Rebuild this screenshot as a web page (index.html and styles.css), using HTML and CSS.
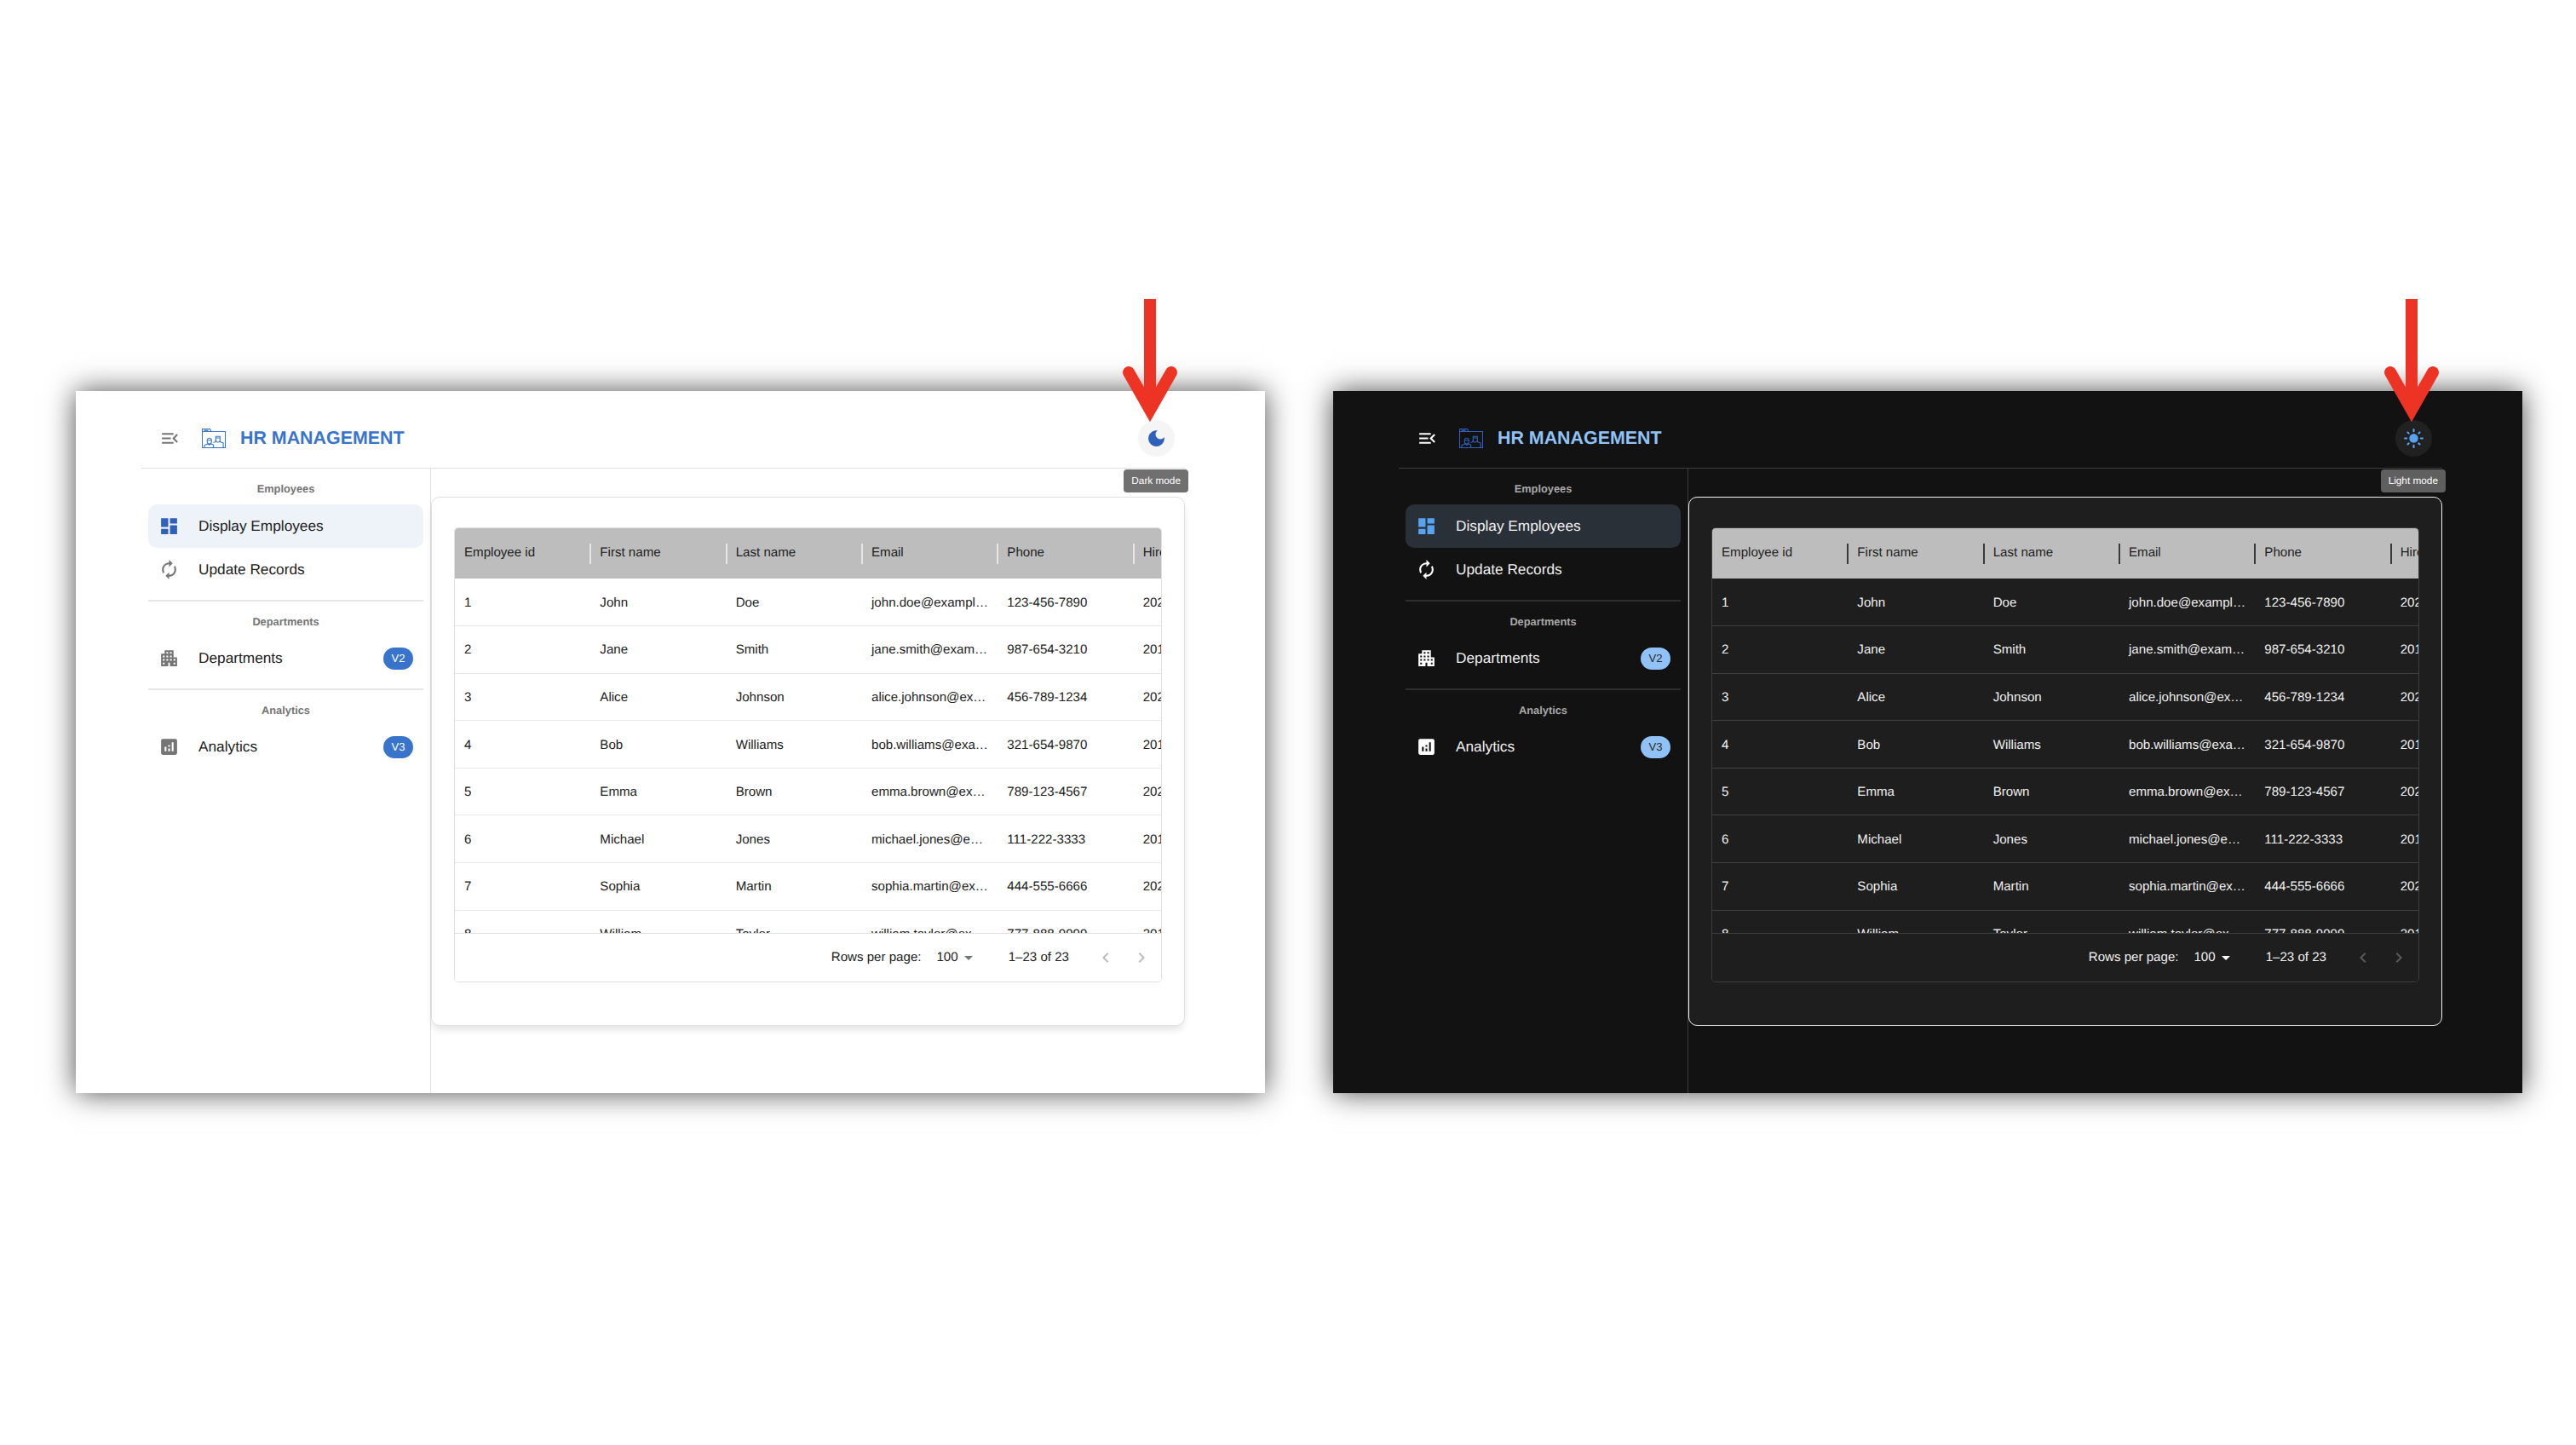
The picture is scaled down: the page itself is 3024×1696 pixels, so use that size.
FILE: index.html
```html
<!DOCTYPE html>
<html lang="en">
<head>
<meta charset="utf-8">
<title>HR Management themes</title>
<link rel="stylesheet" href="styles.css">
</head>
<body>
<svg class="defs" width="0" height="0" aria-hidden="true">
  <symbol id="i-menu" viewBox="0 0 24 24"><path d="M3 18h13v-2H3v2zm0-5h10v-2H3v2zm0-7v2h13V6H3zm18 9.59L17.42 12 21 8.41 19.59 7l-5 5 5 5L21 15.59z"/></symbol>
  <symbol id="i-dash" viewBox="0 0 24 24"><path d="M3 13h8V3H3v10zm0 8h8v-6H3v6zm10 0h8V11h-8v10zm0-18v6h8V3h-8z"/></symbol>
  <symbol id="i-sync" viewBox="0 0 24 24"><path d="M12 6v3l4-4-4-4v3c-4.42 0-8 3.58-8 8 0 1.57.46 3.03 1.24 4.26L6.7 14.8c-.45-.83-.7-1.79-.7-2.8 0-3.31 2.69-6 6-6zm6.76 1.74L17.3 9.2c.44.84.7 1.79.7 2.8 0 3.31-2.69 6-6 6v-3l-4 4 4 4v-3c4.42 0 8-3.58 8-8 0-1.57-.46-3.03-1.24-4.26z"/></symbol>
  <symbol id="i-apt" viewBox="0 0 24 24"><path d="M17 11V3H7v4H3v14h8v-4h2v4h8V11h-4zM7 19H5v-2h2v2zm0-4H5v-2h2v2zm0-4H5V9h2v2zm4 4H9v-2h2v2zm0-4H9V9h2v2zm0-4H9V5h2v2zm4 8h-2v-2h2v2zm0-4h-2V9h2v2zm0-4h-2V5h2v2zm4 12h-2v-2h2v2zm0-4h-2v-2h2v2z"/></symbol>
  <symbol id="i-ana" viewBox="0 0 24 24"><path d="M19 3H5c-1.1 0-2 .9-2 2v14c0 1.1.9 2 2 2h14c1.1 0 2-.9 2-2V5c0-1.1-.9-2-2-2zM9 17H7v-5h2v5zm4 0h-2v-3h2v3zm0-5h-2v-2h2v2zm4 5h-2V7h2v10z"/></symbol>
  <symbol id="i-moon" viewBox="0 0 24 24"><path d="M12 3c-4.97 0-9 4.03-9 9s4.03 9 9 9 9-4.03 9-9c0-.46-.04-.92-.1-1.36-.98 1.37-2.58 2.26-4.4 2.26-2.98 0-5.4-2.42-5.4-5.4 0-1.81.89-3.42 2.26-4.4-.44-.06-.9-.1-1.36-.1z"/></symbol>
  <symbol id="i-sun" viewBox="0 0 24 24"><path d="M12 7c-2.76 0-5 2.24-5 5s2.24 5 5 5 5-2.24 5-5-2.24-5-5-5zM2 13h2c.55 0 1-.45 1-1s-.45-1-1-1H2c-.55 0-1 .45-1 1s.45 1 1 1zm18 0h2c.55 0 1-.45 1-1s-.45-1-1-1h-2c-.55 0-1 .45-1 1s.45 1 1 1zM11 2v2c0 .55.45 1 1 1s1-.45 1-1V2c0-.55-.45-1-1-1s-1 .45-1 1zm0 18v2c0 .55.45 1 1 1s1-.45 1-1v-2c0-.55-.45-1-1-1s-1 .45-1 1zM5.99 4.58c-.39-.39-1.03-.39-1.41 0-.39.39-.39 1.03 0 1.41l1.06 1.06c.39.39 1.03.39 1.41 0s.39-1.03 0-1.41L5.99 4.58zm12.37 12.37c-.39-.39-1.03-.39-1.41 0-.39.39-.39 1.03 0 1.41l1.06 1.06c.39.39 1.03.39 1.41 0 .39-.39.39-1.03 0-1.41l-1.06-1.06zm1.06-10.96c.39-.39.39-1.03 0-1.41-.39-.39-1.03-.39-1.41 0l-1.06 1.06c-.39.39-.39 1.03 0 1.41s1.03.39 1.41 0l1.06-1.06zM7.05 18.36c.39-.39.39-1.03 0-1.41-.39-.39-1.03-.39-1.41 0l-1.06 1.06c-.39.39-.39 1.03 0 1.41s1.03.39 1.41 0l1.06-1.06z"/></symbol>
  <symbol id="i-caret" viewBox="0 0 24 24"><path d="M7 10l5 5 5-5z"/></symbol>
  <symbol id="i-prev" viewBox="0 0 24 24"><path d="M15.41 7.41 14 6l-6 6 6 6 1.41-1.41L10.83 12z"/></symbol>
  <symbol id="i-next" viewBox="0 0 24 24"><path d="M10 6 8.59 7.41 13.17 12l-4.58 4.59L10 18l6-6z"/></symbol>
  <symbol id="i-logo" viewBox="0 0 28 23">
    <g fill="none" stroke="currentColor" stroke-width="1.1">
      <path d="M.5 3.5h27v19H.5zM.5 6.5V.5h9l1.5 3"/>
      <path d="M2.5 2.2h5" stroke-width="1.4"/>
      <path d="M3 22v-2.5l4-1.6 1.8 1.4 1.8-1.4 3 1.2v2.9"/>
      <path d="M6.3 13.2a2.6 2.6 0 0 1 5 0v2.4a2.5 2.5 0 0 1-5 0zM6 13.8h5.6"/>
      <path d="M13.5 16.6l2.3-.9v-1.5M21.6 14.2v1.5l3.5 1.3v5M13 20h1"/>
      <path d="M16.3 9.3h5v4.2a2.5 2.5 0 0 1-5 0zM16.3 11h5"/>
    </g>
  </symbol>
</svg>

<main class="stage">
  <section class="window light">
    <svg class="arrow" viewBox="0 0 64 142" aria-hidden="true"><path class="arrow-stem" d="M32 0V130"/><path class="arrow-head" d="M7 86 32 130 57 86"/></svg>
    <header class="topbar">
      <div class="brand">
        <svg class="icon menu-icon"><use href="#i-menu"/></svg>
        <svg class="logo"><use href="#i-logo"/></svg>
        <h1 class="title">HR MANAGEMENT</h1>
      </div>
      <button class="toggle" type="button"><svg class="icon"><use href="#i-moon"/></svg></button>
      <span class="tooltip">Dark mode</span>
    </header>
    <div class="body">
      <nav class="sidebar">
        <p class="group first">Employees</p>
        <a class="item active"><svg class="icon"><use href="#i-dash"/></svg><span class="label">Display Employees</span></a>
        <a class="item"><svg class="icon"><use href="#i-sync"/></svg><span class="label">Update Records</span></a>
        <hr class="rule">
        <p class="group">Departments</p>
        <a class="item"><svg class="icon"><use href="#i-apt"/></svg><span class="label">Departments</span><span class="badge">V2</span></a>
        <hr class="rule">
        <p class="group">Analytics</p>
        <a class="item"><svg class="icon"><use href="#i-ana"/></svg><span class="label">Analytics</span><span class="badge">V3</span></a>
      </nav>
      <div class="content">
        <div class="card">
          <div class="grid">
            <div class="scroller">
              <table class="table">
                <thead><tr><th>Employee id</th><th>First name</th><th>Last name</th><th>Email</th><th>Phone</th><th>Hire date</th></tr></thead>
                <tbody>
                  <tr><td>1</td><td>John</td><td>Doe</td><td>john.doe@example.com</td><td>123-456-7890</td><td>2022-01-15</td></tr>
                  <tr><td>2</td><td>Jane</td><td>Smith</td><td>jane.smith@example.com</td><td>987-654-3210</td><td>2019-03-20</td></tr>
                  <tr><td>3</td><td>Alice</td><td>Johnson</td><td>alice.johnson@example.com</td><td>456-789-1234</td><td>2020-06-10</td></tr>
                  <tr><td>4</td><td>Bob</td><td>Williams</td><td>bob.williams@example.com</td><td>321-654-9870</td><td>2018-11-05</td></tr>
                  <tr><td>5</td><td>Emma</td><td>Brown</td><td>emma.brown@example.com</td><td>789-123-4567</td><td>2021-02-28</td></tr>
                  <tr><td>6</td><td>Michael</td><td>Jones</td><td>michael.jones@example.com</td><td>111-222-3333</td><td>2017-09-14</td></tr>
                  <tr><td>7</td><td>Sophia</td><td>Martin</td><td>sophia.martin@example.com</td><td>444-555-6666</td><td>2022-07-01</td></tr>
                  <tr><td>8</td><td>William</td><td>Taylor</td><td>william.taylor@example.com</td><td>777-888-9999</td><td>2019-12-12</td></tr>
                </tbody>
              </table>
            </div>
            <div class="pager">
              <span class="rows-label">Rows per page:</span>
              <span class="rows-value">100</span>
              <svg class="caret"><use href="#i-caret"/></svg>
              <span class="range">1–23 of 23</span>
              <svg class="chev chev-prev"><use href="#i-prev"/></svg>
              <svg class="chev chev-next"><use href="#i-next"/></svg>
            </div>
          </div>
        </div>
      </div>
    </div>
  </section>

  <section class="window dark">
    <svg class="arrow" viewBox="0 0 64 142" aria-hidden="true"><path class="arrow-stem" d="M32 0V130"/><path class="arrow-head" d="M7 86 32 130 57 86"/></svg>
    <header class="topbar">
      <div class="brand">
        <svg class="icon menu-icon"><use href="#i-menu"/></svg>
        <svg class="logo"><use href="#i-logo"/></svg>
        <h1 class="title">HR MANAGEMENT</h1>
      </div>
      <button class="toggle" type="button"><svg class="icon"><use href="#i-sun"/></svg></button>
      <span class="tooltip">Light mode</span>
    </header>
    <div class="body">
      <nav class="sidebar">
        <p class="group first">Employees</p>
        <a class="item active"><svg class="icon"><use href="#i-dash"/></svg><span class="label">Display Employees</span></a>
        <a class="item"><svg class="icon"><use href="#i-sync"/></svg><span class="label">Update Records</span></a>
        <hr class="rule">
        <p class="group">Departments</p>
        <a class="item"><svg class="icon"><use href="#i-apt"/></svg><span class="label">Departments</span><span class="badge">V2</span></a>
        <hr class="rule">
        <p class="group">Analytics</p>
        <a class="item"><svg class="icon"><use href="#i-ana"/></svg><span class="label">Analytics</span><span class="badge">V3</span></a>
      </nav>
      <div class="content">
        <div class="card">
          <div class="grid">
            <div class="scroller">
              <table class="table">
                <thead><tr><th>Employee id</th><th>First name</th><th>Last name</th><th>Email</th><th>Phone</th><th>Hire date</th></tr></thead>
                <tbody>
                  <tr><td>1</td><td>John</td><td>Doe</td><td>john.doe@example.com</td><td>123-456-7890</td><td>2022-01-15</td></tr>
                  <tr><td>2</td><td>Jane</td><td>Smith</td><td>jane.smith@example.com</td><td>987-654-3210</td><td>2019-03-20</td></tr>
                  <tr><td>3</td><td>Alice</td><td>Johnson</td><td>alice.johnson@example.com</td><td>456-789-1234</td><td>2020-06-10</td></tr>
                  <tr><td>4</td><td>Bob</td><td>Williams</td><td>bob.williams@example.com</td><td>321-654-9870</td><td>2018-11-05</td></tr>
                  <tr><td>5</td><td>Emma</td><td>Brown</td><td>emma.brown@example.com</td><td>789-123-4567</td><td>2021-02-28</td></tr>
                  <tr><td>6</td><td>Michael</td><td>Jones</td><td>michael.jones@example.com</td><td>111-222-3333</td><td>2017-09-14</td></tr>
                  <tr><td>7</td><td>Sophia</td><td>Martin</td><td>sophia.martin@example.com</td><td>444-555-6666</td><td>2022-07-01</td></tr>
                  <tr><td>8</td><td>William</td><td>Taylor</td><td>william.taylor@example.com</td><td>777-888-9999</td><td>2019-12-12</td></tr>
                </tbody>
              </table>
            </div>
            <div class="pager">
              <span class="rows-label">Rows per page:</span>
              <span class="rows-value">100</span>
              <svg class="caret"><use href="#i-caret"/></svg>
              <span class="range">1–23 of 23</span>
              <svg class="chev chev-prev"><use href="#i-prev"/></svg>
              <svg class="chev chev-next"><use href="#i-next"/></svg>
            </div>
          </div>
        </div>
      </div>
    </div>
  </section>
</main>
</body>
</html>
```

FILE: styles.css
```css
* { box-sizing: border-box; }

html, body { margin: 0; height: 100%; background: #fff; }

body {
  font-family: "Liberation Sans", Arial, sans-serif;
  text-rendering: geometricPrecision;
  overflow: hidden;
}

.defs { position: absolute; }

.stage {
  display: flex;
  gap: 80px;
  padding: 459px 0 0 89px;
}

.light {
  --bg: #fff;
  --card: #fff;
  --card-border: #e0e0e0;
  --line: #e0e0e0;
  --rule: #e6e6e6;
  --text: #212121;
  --muted: #757575;
  --icon: #757575;
  --brand: #3874cb;
  --logo: #3874cb;
  --accent: #2f60bc;
  --active: #eef3fa;
  --badge-bg: #3874cb;
  --badge-fg: #fff;
  --toggle: #f5f5f5;
  --tip: #707070;
  --row: #e8e8e8;
  --menu: #757575;
  --disabled: #bdbdbd;
  --card-shadow: 0 6px 10px -2px rgba(0, 0, 0, .12);
}

.dark {
  --bg: #121212;
  --card: #1e1e1e;
  --card-border: #f0f0f0;
  --line: #3d3d3d;
  --rule: #2e2e2e;
  --text: #f0f0f0;
  --muted: #a8a8a8;
  --icon: #fff;
  --brand: #90c2f5;
  --logo: #2f60bc;
  --accent: #59a2f0;
  --active: #2a3038;
  --badge-bg: #90c2f5;
  --badge-fg: #2b2b2b;
  --toggle: #212121;
  --tip: #5f5f5f;
  --row: #404040;
  --menu: #fff;
  --disabled: #5a5a5a;
  --card-shadow: none;
}

.window {
  position: relative;
  flex: none;
  width: 1396px;
  height: 824px;
  padding: 0 94px 0 77px;
  background: var(--bg);
  color: var(--text);
  box-shadow: 0 0 32px rgba(0, 0, 0, .7);
}

.arrow {
  position: absolute;
  top: -108px;
  left: 1229px;
  width: 64px;
  height: 142px;
  z-index: 2;
  overflow: visible;
}

.dark .arrow { left: 1234px; }

.arrow-stem,
.arrow-head {
  fill: none;
  stroke: #ec3324;
  stroke-width: 14;
  stroke-linecap: round;
  stroke-linejoin: miter;
}

.arrow-stem { stroke-linecap: butt; }

.topbar {
  position: relative;
  display: flex;
  align-items: center;
  justify-content: space-between;
  height: 91px;
  padding-top: 21px;
  border-bottom: 1px solid var(--line);
}

.brand { display: flex; align-items: center; }

.icon { flex: none; width: 25px; height: 25px; fill: var(--icon); }

.menu-icon { margin-left: 21px; fill: var(--menu); }

.logo {
  width: 28px;
  height: 23px;
  margin-left: 25px;
  color: var(--logo);
}

.title {
  margin: 0 0 1px 17px;
  font-size: 21.4px;
  font-weight: 700;
  color: var(--brand);
}

.toggle {
  display: flex;
  align-items: center;
  justify-content: center;
  width: 43px;
  height: 43px;
  margin: 0 12px 0 0;
  padding: 0;
  border: 0;
  border-radius: 50%;
  background: var(--toggle);
}

.toggle .icon { fill: var(--accent); }

.tooltip {
  position: absolute;
  top: 92px;
  right: -4px;
  z-index: 1;
  padding: 0 9px;
  height: 27px;
  line-height: 26px;
  font-size: 11.8px;
  white-space: nowrap;
  color: #fff;
  background: var(--tip);
  border-radius: 4px;
}

.body {
  display: flex;
  height: 733px;
}

.sidebar {
  flex: none;
  width: 340px;
  padding: 0 8px;
  border-right: 1px solid var(--line);
}

.group {
  margin: 0;
  height: 16px;
  line-height: 16px;
  text-align: center;
  font-size: 12.8px;
  font-weight: 700;
  color: var(--muted);
}

.group.first { margin-top: 16px; margin-bottom: 10px; }

.group:not(.first) { margin-top: 16px; margin-bottom: 9px; }

.item {
  display: flex;
  align-items: center;
  height: 51px;
  padding: 0 12px;
  border-radius: 10px;
}

.item .icon { margin-right: 22px; }

.item.active { background: var(--active); }

.item.active .icon { fill: var(--accent); }

.label { flex: 1; font-size: 17.25px; margin-top: -1px; }

.badge {
  width: 35px;
  height: 26px;
  line-height: 25px;
  text-align: center;
  border-radius: 13px;
  font-size: 13px;
  background: var(--badge-bg);
  color: var(--badge-fg);
}

.rule {
  margin: 10px 0 0;
  border: 0;
  height: 2px;
  background: var(--rule);
}

.content { flex: 1; min-width: 0; padding-top: 33px; }

.card {
  height: 621px;
  padding: 35px 26px 50px 26px;
  background: var(--card);
  border: 1px solid var(--card-border);
  border-radius: 10px;
  box-shadow: var(--card-shadow);
}

.grid {
  display: flex;
  flex-direction: column;
  height: 534px;
  border: 1px solid var(--line);
  border-radius: 5px;
  overflow: hidden;
}

.scroller { flex: 1; min-height: 0; overflow: hidden; }

.table {
  width: 956px;
  table-layout: fixed;
  border-collapse: collapse;
  font-size: 15.1px;
}

.table th {
  position: relative;
  height: 59px;
  padding: 0 11px 2px;
  text-align: left;
  font-weight: 400;
  color: #212121;
  background: #bdbdbd;
}

.table th + th::before {
  content: "";
  position: absolute;
  left: -1px;
  top: 18px;
  height: 24px;
  width: 2px;
  background: #e6e6e6;
}

.dark .table th + th::before { background: #3a3a3a; }

.table td {
  height: 55.6px;
  padding: 1px 11px 0;
  border-bottom: 1px solid var(--row);
  white-space: nowrap;
  overflow: hidden;
  text-overflow: ellipsis;
}

.table td:last-child { text-overflow: clip; }

.pager {
  display: flex;
  align-items: center;
  justify-content: flex-end;
  flex: none;
  height: 57px;
  padding: 0 11px 2px 0;
  border-top: 1px solid var(--line);
  font-size: 15.1px;
  background: var(--card);
}

.rows-value { margin-left: 18px; }

.caret { width: 24px; height: 24px; margin: 2px 0 0 0; fill: var(--muted); }

.dark .caret { fill: #fff; }

.range { margin-left: 35px; }

.chev { width: 24px; height: 24px; fill: var(--disabled); margin-top: 2px; }

.chev-prev { margin-left: 31px; }

.chev-next { margin-left: 18px; }
```
